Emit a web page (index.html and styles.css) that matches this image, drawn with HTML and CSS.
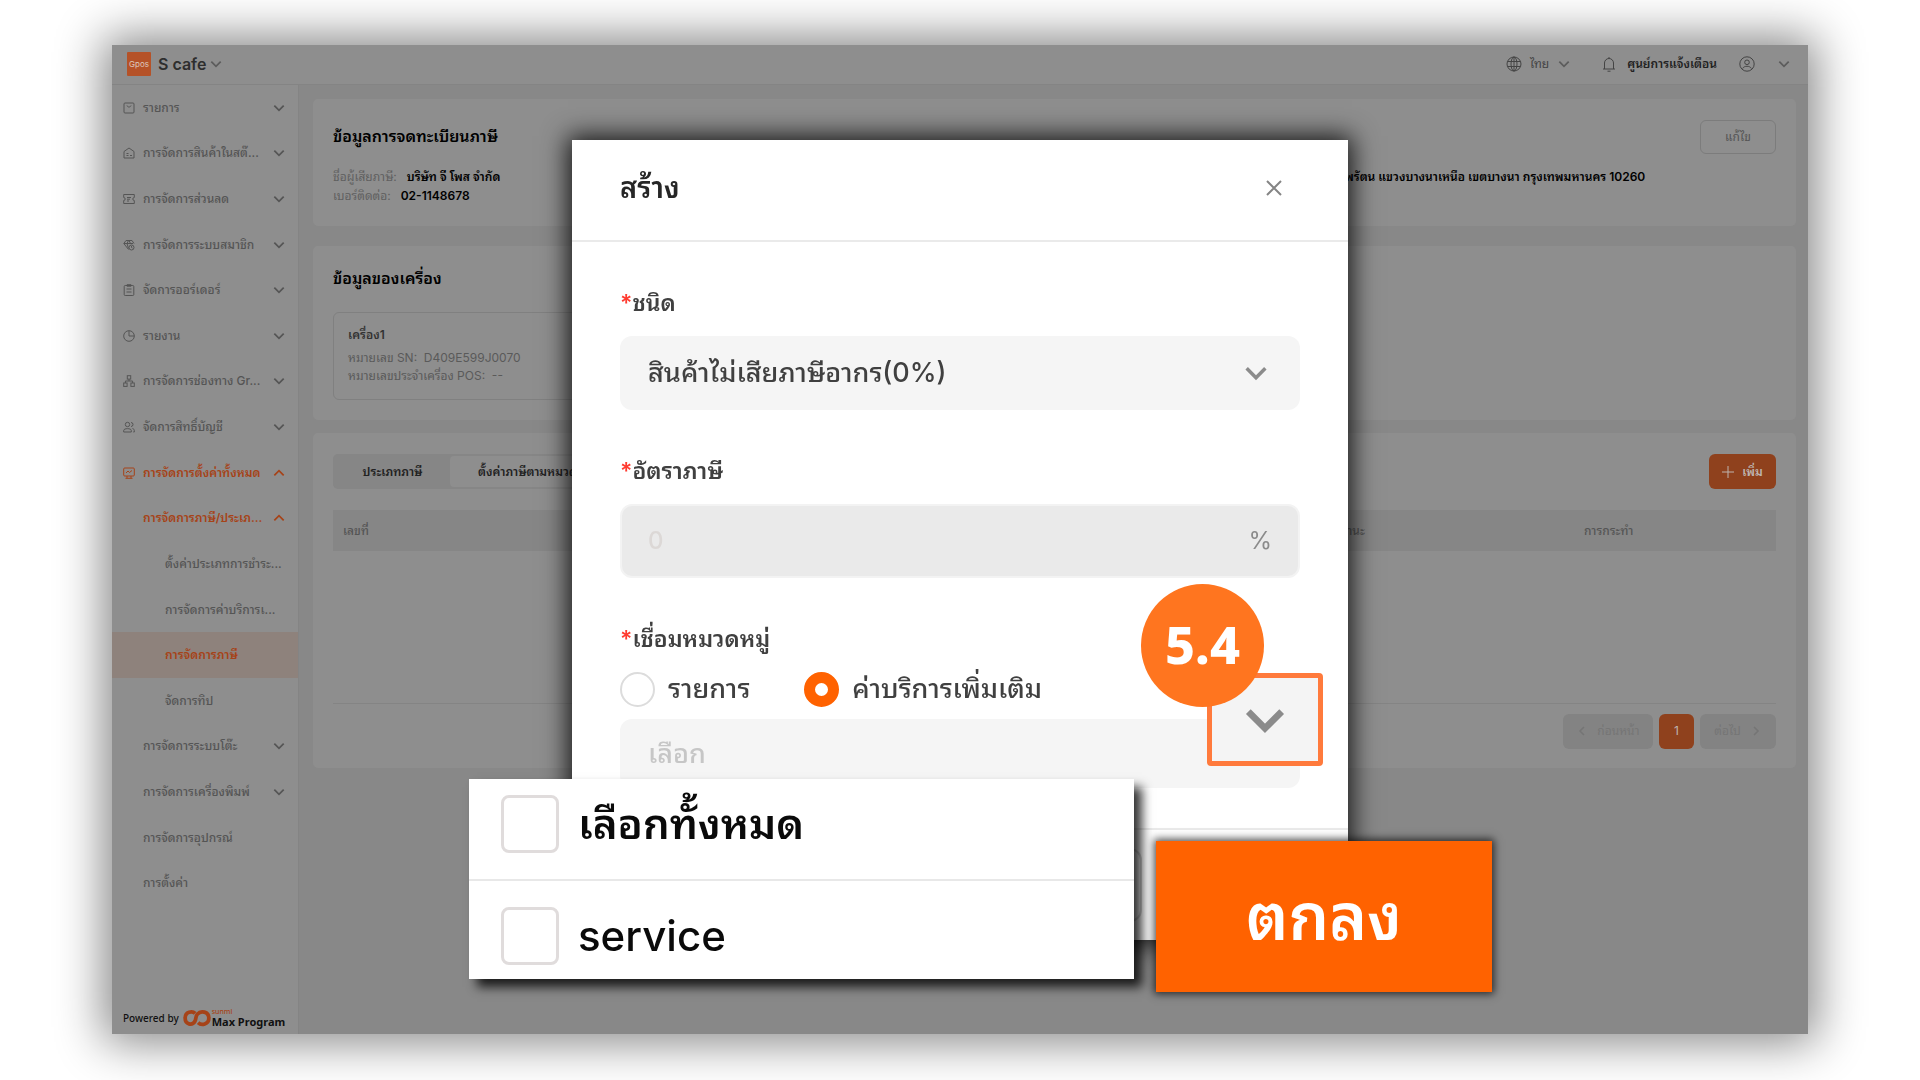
FILE: index.html
```html
<!DOCTYPE html>
<html lang="th">
<head>
<meta charset="utf-8">
<title>การจัดการภาษี - S cafe</title>
<link rel="stylesheet" href="styles.css">
</head>
<body>
<svg class="sprite" aria-hidden="true">
  <symbol id="down" viewBox="0 0 12 12"><path d="M2 4 6 8 10 4"/></symbol>
  <symbol id="up" viewBox="0 0 12 12"><path d="M2 8 6 4 10 8"/></symbol>
</svg>
<div class="app">
  <header class="topbar">
    <span class="logo">Gpos</span>
    <strong class="store">S cafe</strong>
    <svg class="chev"><use href="#down"/></svg>
    <div class="tools">
      <svg class="ico-lg" viewBox="0 0 16 16"><circle cx="8" cy="8" r="7"/><ellipse cx="8" cy="8" rx="3" ry="7"/><path d="M1.500 5.500h13M1.500 10.500h13M8 1v14"/></svg>
      <span class="lang">ไทย</span>
      <svg class="chev"><use href="#down"/></svg>
      <svg class="ico-lg bell" viewBox="0 0 16 16"><path d="M2 13h12M3.500 13V7a4.500 4.500 0 0 1 9 0v6M8 2.500V1M6.500 15.200h3"/></svg>
      <span class="notice">ศูนย์การแจ้งเตือน</span>
      <svg class="ico-lg user" viewBox="0 0 16 16"><circle cx="8" cy="8" r="7.200"/><circle cx="8" cy="6.300" r="2.300"/><path d="M3.600 12.500c1.500-3 7.300-3 8.800 0"/></svg>
      <svg class="chev"><use href="#down"/></svg>
    </div>
  </header>
  <div class="body">
    <aside class="side">
      <nav class="menu">
        <a href="#" class="item"><svg class="ico" viewBox="0 0 12 12"><rect x="1" y="1" width="10" height="10" rx="1"/><path d="M4 3.500c.5 2 3.500 2 4 0"/></svg><span class="txt">รายการ</span><svg class="chev"><use href="#down"/></svg></a>
        <a href="#" class="item"><svg class="ico" viewBox="0 0 12 12"><path d="M1 4.500 6 1l5 3.500V11H1zM3.500 6.500h2M3.500 8.500h2M7 8.500h2"/></svg><span class="txt">การจัดการสินค้าในสต๊...</span><svg class="chev"><use href="#down"/></svg></a>
        <a href="#" class="item"><svg class="ico" viewBox="0 0 12 12"><path d="M.700 1.500h10.600v3a1.500 1.500 0 0 0 0 3v3H.700v-3a1.500 1.500 0 0 0 0-3zM4 4.500h4M4 6.200h3M4 8h2"/></svg><span class="txt">การจัดการส่วนลด</span><svg class="chev"><use href="#down"/></svg></a>
        <a href="#" class="item"><svg class="ico" viewBox="0 0 12 12"><path d="M5.500 10.500.800 4.500 3 1.500h6l2 3M1 4.500h9M4 4.500l1.500 5M4 4.500 5.500 1.500M7.500 4.500 6 1.500"/><circle cx="8.500" cy="8.500" r="2.500"/><path d="M8.500 7v1.500l1 .5"/></svg><span class="txt">การจัดการระบบสมาชิก</span><svg class="chev"><use href="#down"/></svg></a>
        <a href="#" class="item"><svg class="ico" viewBox="0 0 12 12"><rect x="1.200" y="1.500" width="9.600" height="10" rx="1"/><path d="M4 .700h4v1.500H4zM3.500 5h5M3.500 8h5"/></svg><span class="txt">จัดการออร์เดอร์</span><svg class="chev"><use href="#down"/></svg></a>
        <a href="#" class="item"><svg class="ico" viewBox="0 0 12 12"><circle cx="6" cy="6" r="5.300"/><path d="M6 .700V6h5.300"/></svg><span class="txt">รายงาน</span><svg class="chev"><use href="#down"/></svg></a>
        <a href="#" class="item"><svg class="ico" viewBox="0 0 12 12"><rect x="4.300" y=".700" width="3.400" height="3.400"/><rect x=".700" y="8" width="3.400" height="3.400"/><rect x="7.900" y="8" width="3.400" height="3.400"/><path d="M6 4v2M2.400 8V6h7.200v2"/></svg><span class="txt">การจัดการช่องทาง Gr...</span><svg class="chev"><use href="#down"/></svg></a>
        <a href="#" class="item"><svg class="ico" viewBox="0 0 12 12"><circle cx="4.500" cy="3.500" r="2.200"/><path d="M.700 11V9.500C.700 7 8.300 7 8.300 9.500V11zM8 1.500a2 2 0 0 1 0 4M9.500 7.500c1.300.5 1.800 1 1.800 2V11h-1"/></svg><span class="txt">จัดการสิทธิ์บัญชี</span><svg class="chev"><use href="#down"/></svg></a>
        <a href="#" class="item on"><svg class="ico" viewBox="0 0 12 12"><rect x=".700" y="1" width="10.600" height="8" rx="1"/><path d="m3 6 2-2 1.500 1.500L9 3.500M4 9v2M8 9v2M2.500 11.300h7"/></svg><span class="txt">การจัดการตั้งค่าทั้งหมด</span><svg class="chev"><use href="#up"/></svg></a>
        <a href="#" class="item on sub"><span class="txt">การจัดการภาษี/ประเภ...</span><svg class="chev"><use href="#up"/></svg></a>
        <a href="#" class="item leaf"><span class="txt">ตั้งค่าประเภทการชำระ...</span></a>
        <a href="#" class="item leaf"><span class="txt">การจัดการค่าบริการเ...</span></a>
        <a href="#" class="item leaf on current"><span class="txt">การจัดการภาษี</span></a>
        <a href="#" class="item leaf"><span class="txt">จัดการทิป</span></a>
        <a href="#" class="item sub"><span class="txt">การจัดการระบบโต๊ะ</span><svg class="chev"><use href="#down"/></svg></a>
        <a href="#" class="item sub"><span class="txt">การจัดการเครื่องพิมพ์</span><svg class="chev"><use href="#down"/></svg></a>
        <a href="#" class="item sub"><span class="txt">การจัดการอุปกรณ์</span></a>
        <a href="#" class="item sub"><span class="txt">การตั้งค่า</span></a>
      </nav>
      <footer class="powered">
        <span>Powered by</span>
        <svg class="loop" viewBox="0 0 30 18"><path d="M13 4C10 1 2.300 2 2.300 9s7.500 8.500 10.500 3.500C14 10 13.500 7 15.500 4.800 19 .500 27.700 2 27.700 9s-8 8.500-11.500 5"/></svg>
        <span class="brand"><small>sunmi</small><b>Max Program</b></span>
      </footer>
    </aside>
    <main class="main">
      <section class="card tax">
        <div class="head"><h2>ข้อมูลการจดทะเบียนภาษี</h2><button class="edit">แก้ไข</button></div>
        <div class="info">
          <p><span>ชื่อผู้เสียภาษี:</span><b>บริษัท จี โพส จำกัด</b></p>
          <p><b>พรัตน แขวงบางนาเหนือ เขตบางนา กรุงเทพมหานคร 10260</b></p>
          <p><span>เบอร์ติดต่อ:</span><b>02-1148678</b></p>
        </div>
      </section>
      <section class="card device">
        <h2>ข้อมูลของเครื่อง</h2>
        <div class="machine">
          <h3>เครื่อง1</h3>
          <p>หมายเลข SN:&nbsp; D409E599J0070</p>
          <p>หมายเลขประจำเครื่อง POS:&nbsp; --</p>
        </div>
      </section>
      <section class="card rates">
        <div class="head">
          <div class="tabs"><button class="tab">ประเภทภาษี</button><button class="tab active">ตั้งค่าภาษีตามหมวด</button></div>
          <button class="add"><svg class="plus" viewBox="0 0 12 12"><path d="M6 0v12M0 6h12"/></svg>เพิ่ม</button>
        </div>
        <table class="grid">
          <thead><tr><th class="c1">เลขที่</th><th class="c2">สถานะ</th><th class="c3">การกระทำ</th></tr></thead>
          <tbody><tr><td colspan="3"></td></tr></tbody>
        </table>
        <div class="pager">
          <button class="page" disabled><svg class="arrow" viewBox="0 0 12 12"><path d="M8 2 4 6l4 4"/></svg>ก่อนหน้า</button>
          <button class="page cur">1</button>
          <button class="page next" disabled>ต่อไป<svg class="arrow" viewBox="0 0 12 12"><path d="m4 2 4 4-4 4"/></svg></button>
        </div>
      </section>
    </main>
  </div>
</div>

<div class="overlay">
  <form class="modal">
    <header class="m-head"><h1>สร้าง</h1><button type="button" class="close" aria-label="ปิด"><svg viewBox="0 0 16 16"><path d="m1 1 14 14M15 1 1 15"/></svg></button></header>
    <div class="m-body">
      <label class="lbl" for="kind"><i>*</i>ชนิด</label>
      <div class="field"><select id="kind"><option>สินค้าไม่เสียภาษีอากร(0%)</option></select><svg class="caret"><use href="#down"/></svg></div>
      <label class="lbl" for="rate"><i>*</i>อัตราภาษี</label>
      <div class="field off"><input id="rate" type="text" placeholder="0" disabled><span class="unit">%</span></div>
      <div class="lbl"><i>*</i><span>เชื่อมหมวดหมู่</span></div>
      <div class="radios">
        <label><input type="radio" name="link">รายการ</label>
        <label><input type="radio" name="link" checked>ค่าบริการเพิ่มเติม</label>
      </div>
      <div class="field pick"><input type="text" aria-label="เลือก" placeholder="เลือก"></div>
    </div>
    <footer class="m-foot"><button type="button" class="cancel" aria-label="ยกเลิก"></button></footer>
    <button type="button" class="opener" aria-label="เปิดรายการ"><svg><use href="#down"/></svg></button>
    <span class="step">5.4</span>
    <div class="options">
      <label><input type="checkbox"><span class="all">เลือกทั้งหมด</span></label>
      <label><input type="checkbox"><span>service</span></label>
    </div>
    <button type="button" class="ok">ตกลง</button>
  </form>
</div>
</body>
</html>
```
FILE: styles.css
```css
* { box-sizing: border-box; }
body {
  margin: 0;
  min-height: 100vh;
  display: flex;
  padding: 45px 112px 46px;
  background: #fff;
  color: #333;
  font: 12px/18px Inter, "Noto Sans Thai Looped", "Loma", "Noto Sans Thai", "Noto Sans", sans-serif;
}
h1, h2, h3, p { margin: 0; }
button, input, select { font: inherit; color: inherit; border: 0; margin: 0; padding: 0; }
a { color: inherit; text-decoration: none; }
svg { fill: none; stroke: currentColor; flex: none; }
.sprite { position: absolute; width: 0; height: 0; }
.chev { width: 14px; height: 14px; stroke-width: 1.5; }

.app {
  flex: 1;
  display: flex;
  flex-direction: column;
  background: #888;
  box-shadow: 0 0 44px 8px rgba(0, 0, 0, .48);
}
.topbar {
  height: 40px;
  display: flex;
  align-items: center;
  padding: 0 17px 2px 15px;
  background: #8e8e8e;
  border-bottom: 1px solid #848484;
}
.logo {
  width: 24px;
  height: 24px;
  border-radius: 1px;
  background: #b55228;
  color: #ddc8bc;
  font-size: 8px;
  line-height: 24px;
  text-align: center;
}
.store { margin: 0 3px 0 7px; font-size: 16px; line-height: 20px; font-weight: 600; color: #2e2e2e; }
.topbar .chev { color: #5c5c5c; }
.tools { margin-left: auto; display: flex; align-items: center; color: #444; }
.ico-lg { width: 16px; height: 16px; stroke-width: 1; }
.lang { margin: 0 8px; color: #444; }
.bell { margin: 0 10px 0 30px; }
.notice { color: #222; font-weight: 600; }
.user { margin: 0 22px; }

.body { flex: 1; display: flex; }
.side {
  width: 187px;
  display: flex;
  flex-direction: column;
  background: #8e8e8e;
  border-right: 1px solid #848484;
  color: #555;
}
.menu { flex: 1; display: grid; grid-auto-rows: 1fr; font-weight: 500; }
.item { display: flex; align-items: center; padding: 0 12px 0 11px; white-space: nowrap; }
.ico { width: 12px; height: 12px; stroke-width: 1; margin-right: 8px; }
.txt { flex: 1; }
.sub { padding-left: 31px; }
.leaf { padding-left: 53px; }
.on { color: #a64318; font-weight: 600; }
.current { background: #8e827c; }
.powered {
  height: 128px;
  display: flex;
  align-items: flex-end;
  gap: 4px;
  padding: 0 0 6px 11px;
  color: #111;
  font: 500 10px/20px "Noto Sans", sans-serif;
  white-space: nowrap;
}
.loop { width: 28px; height: 20px; color: #a64318; stroke-width: 4; }
.brand { display: flex; flex-direction: column; margin-left: -3px; }
.brand small { font-size: 7px; line-height: 8px; color: #a64318; }
.brand b { font-size: 11px; line-height: 12px; }

.main { flex: 1; padding: 14px 12px 0 14px; }
.card { background: #8e8e8e; border-radius: 5px; padding: 21px 20px; }
h2 { font-size: 16px; line-height: 32px; font-weight: 600; color: #000; }
.head { display: flex; justify-content: space-between; }
.tax { height: 127px; margin-bottom: 20px; }
.edit { width: 76px; height: 34px; background: none; border: 1px solid #7c7c7c; border-radius: 6px; color: #555; }
.info { display: grid; grid-template-columns: 1012px 1fr; line-height: 19px; padding-top: 13px; color: #606060; }
.info b { color: #000; font-weight: 600; }
.info span { margin-right: 10px; }
.device { height: 174px; padding-top: 16px; margin-bottom: 13px; }
.machine { width: 340px; height: 88px; margin-top: 18px; padding: 12px 14px; border: 1px solid #808080; border-radius: 6px; color: #5a5a5a; }
.machine h3 { font-size: 12px; line-height: 20px; font-weight: 600; color: #333; margin-bottom: 4px; }
.rates { height: 335px; }
.tabs { display: flex; width: 290px; background: #868686; border-radius: 5px; padding: 2px; }
.tab { flex: none; width: 115px; background: none; font-weight: 600; color: #222; border-radius: 4px; }
.tab.active { width: 171px; padding-left: 28px; text-align: left; background: #8e8e8e; }
.add { width: 67px; height: 35px; display: flex; align-items: center; justify-content: center; gap: 8px; border-radius: 6px; background: #8f411d; color: #bdb4af; font-weight: 600; }
.plus { width: 12px; height: 12px; }
.grid { width: 100%; border-collapse: collapse; margin-top: 21px; table-layout: fixed; }
.grid th { height: 41px; padding: 0 10px; background: #868686; text-align: left; font-weight: 500; color: #555; }
.grid td { height: 152px; border-bottom: 1px solid #848484; }
.c1 { width: 990px; }
.c3 { width: 202px; }
.pager { display: flex; justify-content: flex-end; gap: 6px; margin-top: 10px; }
.page { height: 35px; width: 90px; border-radius: 6px; background: #838383; color: #757575; display: flex; align-items: center; justify-content: center; gap: 9px; }
.next { width: 76px; }
.cur { width: 35px; background: #8f411d; color: #bdb4af; }
.arrow { width: 12px; height: 12px; stroke-width: 1.5; }

.overlay { position: fixed; inset: 0; display: grid; place-items: center; }
.modal {
  position: relative;
  width: 776px;
  height: 800px;
  display: flex;
  flex-direction: column;
  background: #fff;
  color: #404040;
  box-shadow: 0 0 24px 4px rgba(0, 0, 0, .85);
  font-size: 27px;
}
.m-head { height: 102px; display: flex; align-items: center; justify-content: space-between; padding: 0 66px 4px 48px; border-bottom: 2px solid #eaeaea; }
h1 { font-size: 29px; line-height: 40px; font-weight: 600; color: #262626; }
.close { width: 16px; height: 16px; background: none; color: #858585; display: flex; }
.close svg { width: 16px; height: 16px; stroke-width: 2; }
.m-body { flex: 1; padding: 41px 48px 0; }
.lbl { display: flex; height: 40px; line-height: 40px; font-size: 23px; font-weight: 600; }
.lbl i { color: #ff3b30; font-style: normal; }
.field { height: 74px; margin: 13px 0 41px; display: flex; align-items: center; background: #f5f5f5; border-radius: 12px; padding: 0 28px; }
.field select, .field input { flex: 1; height: 60px; line-height: 60px; appearance: none; background: none; min-width: 0; font-weight: 500; outline: 0; }
.field input::placeholder { color: #c6c6c6; opacity: 1; }
.caret { width: 28px; height: 28px; margin-right: 2px; color: #8b8b8b; stroke-width: 1.5; }
.off { background: #eaeaea; border: 2px solid #f3f3f3; padding: 0 26px; font-size: 24px; }
.off input::placeholder { color: #dcd8d6; }
.unit { color: #8b8b8b; }
.radios { display: flex; gap: 54px; padding: 10px 0; height: 60px; align-items: center; font-weight: 500; }
.radios label { display: flex; align-items: center; gap: 13px; line-height: 36px; }
.radios input { appearance: none; width: 35px; height: 35px; border: 2px solid #dcdcdc; border-radius: 50%; }
.radios input:checked { border: 11px solid #ff6200; }
.pick { height: 69px; margin: 0; }
.m-foot { height: 112px; border-top: 2px solid #eaeaea; padding: 18px 0 0 400px; }
.cancel { width: 170px; height: 74px; background: #fff; border: 2px solid #d9d9d9; border-radius: 12px; }
.opener { position: absolute; left: 635px; top: 533px; width: 116px; height: 93px; display: grid; place-items: center; background: #f4f4f4; border: 5px solid #ff7a3c; border-radius: 4px; color: #8b8b8b; }
.opener svg { width: 50px; height: 50px; stroke-width: 1.6; }
.step { position: absolute; left: 569px; top: 444px; width: 123px; height: 123px; border-radius: 50%; background: #ff751f; color: #fff; font: 800 52px/120px "Noto Sans", sans-serif; text-align: center; }
.options { position: absolute; left: -103px; top: 639px; width: 665px; background: #fff; color: #0a0a0a; box-shadow: 8px 8px 10px rgba(0, 0, 0, .8); font-size: 42px; font-weight: 500; }
.options label { display: flex; align-items: center; gap: 19px; height: 98px; padding: 12px 0 0 32px; }
.options label:first-child { height: 102px; padding: 0 0 10px 32px; border-bottom: 2px solid #e8e8e8; }
.options input { appearance: none; width: 58px; height: 58px; border: 3px solid #e0dcdc; border-radius: 8px; }
.options .all { font-weight: 600; }
.ok { position: absolute; left: 584px; top: 701px; width: 336px; height: 151px; background: #ff6200; color: #fff; font-size: 64px; font-weight: 600; box-shadow: 0 0 8px 2px rgba(0, 0, 0, .7); }
```
